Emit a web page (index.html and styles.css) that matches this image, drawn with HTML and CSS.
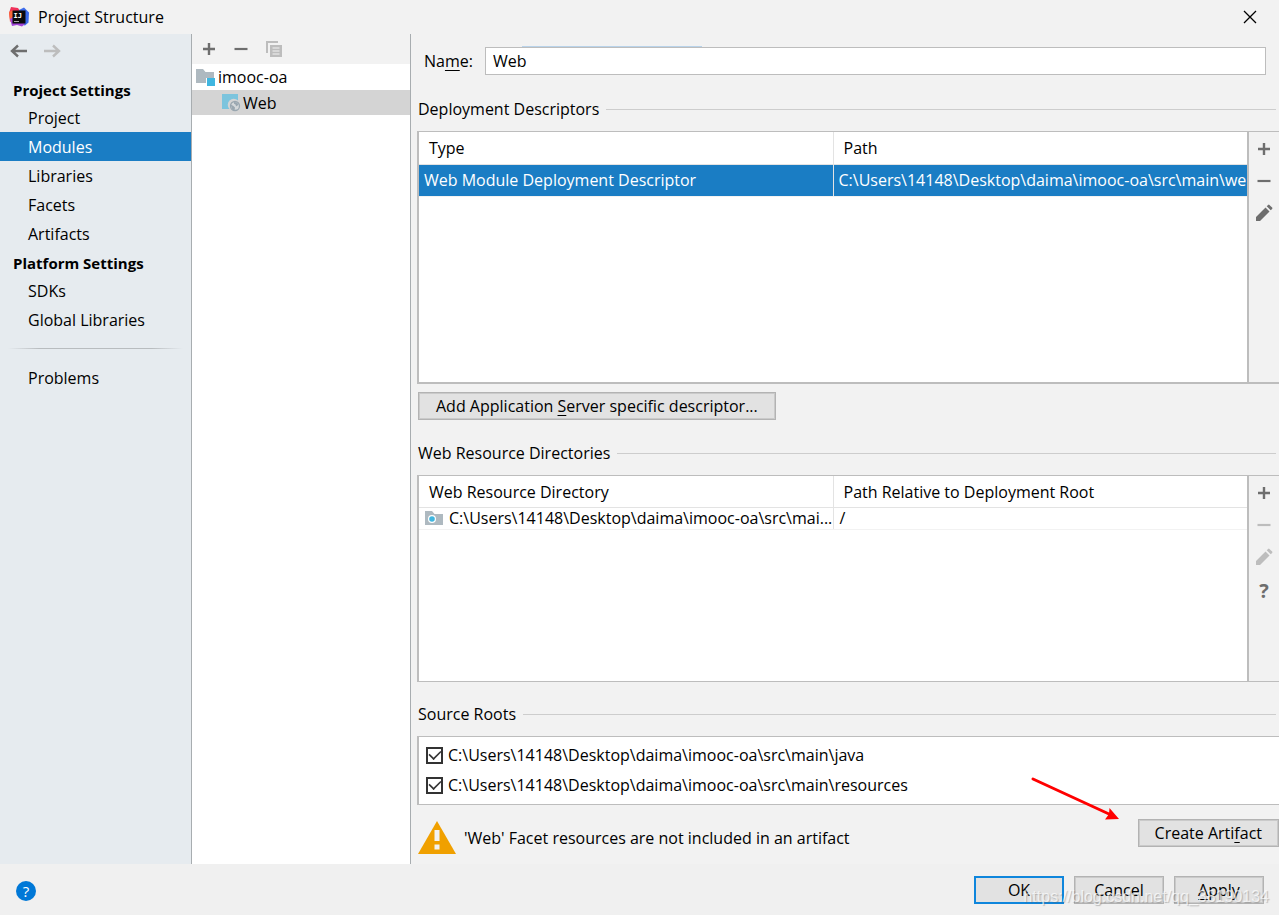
FILE: index.html
```html
<!DOCTYPE html>
<html lang="en">
<head>
<meta charset="utf-8">
<title>Project Structure</title>
<link rel="stylesheet" href="styles.css">
</head>
<body>
<svg class="defs" aria-hidden="true">
  <symbol id="plus" viewBox="0 0 14 14"><path d="M7 1v12M1 7h12" stroke="currentColor" stroke-width="2.4" fill="none"/></symbol>
  <symbol id="minus" viewBox="0 0 14 14"><path d="M0.500 7h13" stroke="currentColor" stroke-width="2.2" fill="none"/></symbol>
  <symbol id="pencil" viewBox="0 0 18 18"><path d="M1 17v-4L10.500 3.500l4 4L5 17zM11.700 2.300l1.400-1.400q.7-.6 1.400 0l2.600 2.600q.6.700 0 1.400l-1.400 1.400z" fill="currentColor"/></symbol>
  <symbol id="back" viewBox="0 0 18 14"><path d="M17 7H2M8 1.500L2 7l6 5.500" stroke="currentColor" stroke-width="2.400" fill="none"/></symbol>
</svg>
<header class="titlebar">
  <svg class="logo" width="20" height="20" viewBox="0 0 20 20" aria-hidden="true">
    <path d="M2 0l7 1 2 3-2 9H1L0 6z" fill="#f0325a"/>
    <path d="M0 5l4-2v10l-3 2z" fill="#f9683a"/>
    <path d="M10 3l5-2.500 5 5-.5 10-3.500 3-8-2z" fill="#3c6bea"/>
    <path d="M1 12l5-3 10 8-3 2.500L8 18l-5 1z" fill="#a144d8"/>
    <rect x="3.500" y="3.500" width="13" height="13" fill="#0a0a0c"/>
    <text class="logo-text" x="4.500" y="10.500">IJ</text>
    <path d="M5 14.500h5" stroke="#aaa" stroke-width="1"/>
  </svg>
  <h1 class="title">Project Structure</h1>
  <button class="close" aria-label="Close"><svg width="14" height="14" viewBox="0 0 14 14"><path d="M1 1l12 12M13 1L1 13" stroke="#000" stroke-width="1.300"/></svg></button>
</header>
<main class="main">
  <aside class="sidebar">
    <div class="history">
      <button class="icon-btn" aria-label="Back"><svg width="18" height="14"><use href="#back"/></svg></button>
      <button class="icon-btn off" aria-label="Forward"><svg class="flip" width="18" height="14"><use href="#back"/></svg></button>
    </div>
    <nav class="nav">
      <h2 class="nav-head">Project Settings</h2>
      <a class="nav-item" href="#">Project</a>
      <a class="nav-item selected" href="#" aria-current="page">Modules</a>
      <a class="nav-item" href="#">Libraries</a>
      <a class="nav-item" href="#">Facets</a>
      <a class="nav-item" href="#">Artifacts</a>
      <h2 class="nav-head">Platform Settings</h2>
      <a class="nav-item" href="#">SDKs</a>
      <a class="nav-item" href="#">Global Libraries</a>
      <hr class="nav-rule">
      <a class="nav-item" href="#">Problems</a>
    </nav>
  </aside>
  <section class="modules">
    <div class="module-tools">
      <button class="icon-btn" aria-label="Add"><svg width="14" height="14"><use href="#plus"/></svg></button>
      <button class="icon-btn" aria-label="Remove"><svg width="14" height="14"><use href="#minus"/></svg></button>
      <button class="icon-btn off" aria-label="Copy"><svg width="16" height="16" viewBox="0 0 16 16"><path d="M0 0h12v2H2v10H0z" fill="currentColor"/><path d="M4 4h12v12H4zM6.500 6.500v1h7v-1zM6.500 9.500v1h7v-1zM6.500 12.500v1h7v-1z" fill="currentColor" fill-rule="evenodd"/></svg></button>
    </div>
    <ul class="tree">
      <li class="tree-row">
        <svg width="20" height="18" viewBox="0 0 20 18" aria-hidden="true"><path d="M0 1h7l2.500 3H18v6h-8v5H0z" fill="#aeb9c0"/><rect x="11" y="10" width="8" height="8" fill="#40b6e0"/></svg>
        imooc-oa</li>
      <li class="tree-row child chosen">
        <svg width="19" height="19" viewBox="0 0 19 19" aria-hidden="true"><path d="M0 1h16v6.500a6 6 0 0 0-8.500 8.500H0z" fill="#7cc4dd"/><circle cx="13" cy="13" r="4.500" fill="#d4d8da" stroke="#9aa7b0" stroke-width="1.300"/><path d="M8.700 11.500l2.800 1.500 1.500 1.500-.5 3-2.500-1.200zM12 9l3 .5 1.500 2-1.500 1.500-1 .2-.5-1.700-1.500-.8z" fill="#9aa7b0"/></svg>
        Web</li>
    </ul>
  </section>
  <section class="editor">
    <div class="name-row">
      <label for="name">Na<u>m</u>e:</label>
      <input id="name" class="name-input" type="text" value="Web">
    </div>
    <h3 class="group">Deployment Descriptors</h3>
    <div class="panel large">
      <div class="panel-body">
        <table class="grid roomy">
          <thead><tr><th>Type</th><th>Path</th></tr></thead>
          <tbody><tr class="picked"><td>Web Module Deployment Descriptor</td><td>C:\Users\14148\Desktop\daima\imooc-oa\src\main\web</td></tr></tbody>
        </table>
      </div>
      <div class="side-tools">
        <button class="icon-btn" aria-label="Add"><svg width="14" height="14"><use href="#plus"/></svg></button>
        <button class="icon-btn" aria-label="Remove"><svg width="14" height="14"><use href="#minus"/></svg></button>
        <button class="icon-btn" aria-label="Edit"><svg width="18" height="18"><use href="#pencil"/></svg></button>
      </div>
    </div>
    <button class="btn wide">Add Application <u>S</u>erver specific descriptor...</button>
    <h3 class="group">Web Resource Directories</h3>
    <div class="panel small">
      <div class="panel-body">
        <table class="grid">
          <thead><tr><th>Web Resource Directory</th><th>Path Relative to Deployment Root</th></tr></thead>
          <tbody><tr><td><span class="cell"><svg width="18" height="15" viewBox="0 0 18 15" aria-hidden="true"><path d="M0 0h7l2.500 3H18v11H0z" fill="#aeb9c0"/><circle cx="7" cy="8" r="4" fill="#fff"/><circle cx="7" cy="8" r="2.800" fill="#40b6e0"/></svg><span>C:\Users\14148\Desktop\daima\imooc-oa\src\mai...</span></span></td><td>/</td></tr></tbody>
        </table>
      </div>
      <div class="side-tools">
        <button class="icon-btn" aria-label="Add"><svg width="14" height="14"><use href="#plus"/></svg></button>
        <button class="icon-btn off" aria-label="Remove"><svg width="14" height="14"><use href="#minus"/></svg></button>
        <button class="icon-btn off" aria-label="Edit"><svg width="18" height="18"><use href="#pencil"/></svg></button>
        <button class="icon-btn question">?</button>
      </div>
    </div>
    <h3 class="group roots-head">Source Roots</h3>
    <div class="roots">
      <label class="root"><input type="checkbox" checked>C:\Users\14148\Desktop\daima\imooc-oa\src\main\java</label>
      <label class="root"><input type="checkbox" checked>C:\Users\14148\Desktop\daima\imooc-oa\src\main\resources</label>
    </div>
    <div class="warning">
      <svg width="38" height="33" viewBox="0 0 38 33" aria-hidden="true"><path d="M19 0l19 33H0z" fill="#f0a000"/><path d="M16.500 9h5v11h-5zM16.500 23.500h5v5h-5z" fill="#f2f2f2"/></svg>
      <p class="warning-text">'Web' Facet resources are not included in an artifact</p>
      <button class="btn create">Create Arti<u>f</u>act</button>
      <svg class="arrow" width="90" height="44" viewBox="0 0 90 44" aria-hidden="true"><path d="M2 2l76 35" stroke="#f00" stroke-width="3" stroke-linecap="round"/><path d="M88 42l-14 .5 4-5.500.500-6z" fill="#f00"/></svg>
    </div>
  </section>
</main>
<footer class="footer">
  <button class="help" aria-label="Help">?</button>
  <button class="btn action primary">OK</button>
  <button class="btn action">Cancel</button>
  <button class="btn action"><u>A</u>pply</button>
  <span class="watermark">https://blog.csdn.net/qq_38190134</span>
</footer>
</body>
</html>
```
FILE: styles.css
```css
* { box-sizing: border-box; }
body {
  margin: 0;
  min-height: 100vh;
  display: flex;
  flex-direction: column;
  background: #f2f2f2;
  color: #000;
  font: 16px/20px "Open Sans", "Noto Sans", sans-serif;
  overflow-x: hidden;
}
h1, h2, h3, p, ul { margin: 0; padding: 0; font-size: inherit; font-weight: normal; }
button, input { font: inherit; color: inherit; }
svg { display: block; flex: none; }
u { text-underline-offset: 3px; text-decoration-thickness: 1px; text-decoration-skip-ink: none; }
.defs { position: absolute; width: 0; height: 0; }

.titlebar { display: flex; align-items: center; height: 34px; padding: 0 20px 0 9px; gap: 9px; }
.title { flex: 1; }
.logo-text { font: bold 7px "DejaVu Sans Mono", monospace; fill: #fff; }
.close { border: 0; background: none; padding: 2px; }

.icon-btn {
  display: flex;
  align-items: center;
  justify-content: center;
  border: 0;
  padding: 0;
  background: none;
  color: #6e6e6e;
}
.off { color: #bdbdbd; }
.flip { transform: scaleX(-1); }

.main { flex: 1; display: flex; }
.sidebar { flex: none; width: 192px; background: #e6ebef; border-right: 1px solid #a8adb0; }
.history { display: flex; align-items: center; gap: 15px; height: 34px; padding-left: 10px; }
.nav { display: flex; flex-direction: column; padding-top: 7px; }
.nav-head { height: 28px; line-height: 30px; padding-left: 13px; font-weight: bold; font-size: 15px; }
.nav-item { height: 29px; line-height: 30px; padding-left: 28px; color: inherit; text-decoration: none; }
.nav-item.selected { background: #1a7dc4; color: #fff; }
.nav-rule {
  height: 1px;
  margin: 14px 8px;
  border: 0;
  background: linear-gradient(to right, transparent, #b8bcbf 18%, #b8bcbf 82%, transparent);
}

.modules { flex: none; width: 219px; background: #fff; border-right: 1px solid #a8adb0; }
.module-tools { display: flex; align-items: center; gap: 18px; height: 30px; padding-left: 10px; background: #f2f2f2; }
.tree { list-style: none; }
.tree-row { display: flex; align-items: center; gap: 2px; height: 26px; padding-left: 4px; }
.tree-row.child { height: 25px; padding-left: 30px; }
.chosen { background: #d4d4d4; }

.editor { flex: 1; min-width: 0; display: flex; flex-direction: column; padding-left: 6px; }
.name-row { position: relative; display: flex; align-items: center; gap: 12px; margin-top: 13px; padding: 0 13px 0 7px; }
.name-row::before { content: ""; position: absolute; left: 105px; top: -1px; width: 180px; height: 1px; background: #b9d3ea; }
.name-input { flex: 1; min-width: 0; height: 28px; border: 1px solid #bdbdbd; background: #fff; padding: 0 7px; outline: none; }
.group { display: flex; align-items: center; gap: 7px; height: 20px; margin: 24px 3px 12px 1px; }
.group::after { content: ""; flex: 1; height: 1px; background: #cdcdcd; }

.panel { display: flex; border: 1px solid #bdbdbd; border-width: 1px 0 2px 2px; }
.panel.large { flex: 11 0 0; }
.panel.small { flex: 9 0 0; border-bottom-width: 1px; }
.panel-body { flex: 1; min-width: 0; background: #fff; border-right: 2px solid #bdbdbd; }
.grid { width: 100%; table-layout: fixed; border-collapse: collapse; }
.grid th, .grid td { height: 22px; padding: 0 0 0 6px; text-align: left; font-weight: normal; white-space: nowrap; overflow: hidden; }
.grid th { height: 31px; padding-left: 10px; border-bottom: 1px solid #e3e3e3; }
.grid td { border-bottom: 1px solid #f2f2f2; }
.grid th + th, .grid td + td { border-left: 1px solid #e3e3e3; }
.grid.roomy th { height: 32px; }
.grid.roomy td { height: 32px; padding-left: 5px; }
.picked { background: #1a7dc4; color: #fff; }
.cell { display: flex; align-items: center; gap: 6px; }
.side-tools { flex: none; width: 30px; padding-top: 1px; }
.side-tools .icon-btn { width: 30px; height: 32px; }
.side-tools .question { height: 36px; font-size: 20px; font-weight: bold; }

.btn { border: 1px solid #b3b3b3; outline: 1px solid #cacaca; outline-offset: -2px; background: #e2e2e2; height: 28px; padding: 0 17px; }
.btn.wide { align-self: flex-start; margin: 8px 0 0 1px; }
.btn.wide + .group { margin-top: 23px; }
.group.roots-head { margin-top: 22px; }
.roots { background: #fff; border: 1px solid #bdbdbd; border-width: 1px 0 1px 2px; padding: 3px 0 4px 7px; }
.root { display: flex; align-items: center; gap: 5px; height: 30px; }
.root input { appearance: none; width: 17px; height: 17px; margin: 0; border: 2px solid #333; background: #fff; display: grid; place-items: center; }
.root input:checked::before { content: ""; width: 12px; height: 7px; margin-bottom: 3px; border: solid #333; border-width: 0 0 2px 2px; transform: rotate(-45deg) scale(0.8); }
.warning { position: relative; display: flex; align-items: center; gap: 8px; height: 59px; padding-left: 1px; }
.warning-text { flex: 1; padding-top: 7px; }
.warning > svg:first-child { margin-top: 6px; }
.create { margin-bottom: 4px; padding: 0 16px; }
.arrow { position: absolute; right: 158px; top: -28px; }

.footer { position: relative; display: flex; align-items: center; gap: 10px; height: 51px; padding: 0 15px 0 16px; background: #f0f0f0; }
.help { width: 20px; height: 20px; margin-right: auto; margin-top: 2px; padding: 0; border: 0; border-radius: 50%; background: #0078d7; color: #fff; font-size: 15px; line-height: 20px; }
.action { width: 90px; padding: 0; }
.primary { border: 2px solid #0f86dc; outline: 0; }
.watermark { position: absolute; right: 10px; bottom: 8px; color: rgba(255, 255, 255, 0.7); text-shadow: 1px 1px 1px rgba(100, 100, 100, 0.4); font: 16px/20px "Liberation Sans", sans-serif; pointer-events: none; }
```
